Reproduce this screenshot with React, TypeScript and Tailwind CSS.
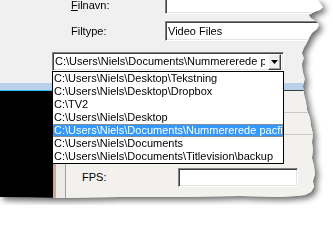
import React from "react";

const items = [
  "C:\\Users\\Niels\\Desktop\\Tekstning",
  "C:\\Users\\Niels\\Desktop\\Dropbox",
  "C:\\TV2",
  "C:\\Users\\Niels\\Desktop",
  "C:\\Users\\Niels\\Documents\\Nummererede pacfiler",
  "C:\\Users\\Niels\\Documents",
  "C:\\Users\\Niels\\Documents\\Titlevision\\backup",
];

const sunken =
  "border border-t-[#828282] border-l-[#828282] border-r-white border-b-white shadow-[inset_1px_1px_0_#404040,inset_-1px_-1px_0_#e3e3e3] bg-white";

export default function App() {
  return (
    <div className="relative w-[333px] h-[205px] overflow-hidden bg-white font-['Liberation_Sans',Arial,sans-serif] text-[11px] leading-[13px] text-black">
      <div className="[filter:drop-shadow(3px_3px_3px_rgba(0,0,0,0.6))]">
        <div className="relative h-[198px] bg-[#f0f0f0] flex flex-col [clip-path:polygon(0_0,318px_0,320px_3px,323px_7px,320px_10px,314px_12px,309px_15px,311px_18px,316px_21px,319px_25px,317px_29px,312px_33px,309px_38px,307px_43px,304px_48px,302px_53px,304px_58px,302px_64px,303px_72px,305px_79px,303px_86px,304px_94px,306px_102px,307px_110px,310px_118px,311px_126px,313px_134px,312px_142px,313px_150px,312px_158px,314px_166px,315px_174px,313px_181px,314px_187px,311px_192px,305px_195px,296px_196px,280px_197px,240px_196px,180px_197px,120px_197px,60px_198px,0_197px)]">
          {/* Filnavn */}
          <div className="flex items-center -mt-[6px] h-[20px] pl-[71px] shrink-0">
            <span className="w-[94px] pt-[2px]">
              <span className="underline">F</span>ilnavn:
            </span>
            <div className={`h-full flex-1 ${sunken}`} />
          </div>
          {/* Filtype */}
          <div className="flex items-center mt-[7px] h-[20px] pl-[71px] shrink-0">
            <span className="w-[94px]">Filtype:</span>
            <div className={`h-full flex-1 flex items-center pl-[2px] ${sunken}`}>
              Video Files
            </div>
          </div>
          {/* Combobox */}
          <div
            className={`ml-[52px] mt-[11px] w-[232px] h-[19px] shrink-0 flex items-center pl-[2px] pr-[2px] py-[1px] ${sunken}`}
          >
            <span className="flex-1 mr-[3px] whitespace-nowrap overflow-hidden">
              C:\Users\Niels\Documents\Nummererede pacfiler
            </span>
            <div className="w-[13px] h-[16px] bg-[#f0f0f0] border border-t-white border-l-white border-r-[#404040] border-b-[#404040] shadow-[inset_-1px_-1px_0_#a0a0a0] flex items-center justify-center">
              <svg width="7" height="4" viewBox="0 0 7 4">
                <polygon points="0,0 7,0 3.5,4" fill="#000" />
              </svg>
            </div>
          </div>
          {/* window behind: blue title strip */}
          <div className="mt-[12px] h-[7px] bg-[#b9d1ea] shrink-0" />
          <div className="h-[1px] flex shrink-0">
            <div className="w-[53px] bg-[#2cc6f5]" />
            <div className="flex-1 bg-[#3c3c3c]" />
          </div>
          {/* lower region */}
          <div className="flex-1 flex">
            <div className="w-[53px] bg-black" />
            <div className="w-[3px] bg-[#c9a99d]" />
            <div className="w-[9px] bg-[#ebeae6]" />
            <div className="w-[1px] bg-[#a0a0a0]" />
            <div className="flex-1 bg-[#f2f1ed] flex flex-col">
              <div className="h-[22px] border-b border-[#c8c8c8]" />
              <div className="h-[22px] border-b border-[#c8c8c8]" />
              <div className="mt-[33px] h-[19px] flex items-center pl-[16px]">
                <span className="w-[96px]">FPS:</span>
                <div className={`w-[120px] h-full ${sunken}`} />
              </div>
            </div>
          </div>

          {/* Dropdown list */}
          <div className="absolute left-[52px] top-[71px] w-[232px] h-[93px] border border-black bg-white flex flex-col">
            {items.map((t, i) =>
              i === 4 ? (
                <div
                  key={t}
                  className="h-[13px] pl-[1px] whitespace-nowrap overflow-hidden bg-[#3399ff] text-white outline-1 outline-dotted outline-[#d08040] -outline-offset-1"
                >
                  {t}
                </div>
              ) : (
                <div key={t} className="h-[13px] pl-[1px] whitespace-nowrap overflow-hidden">
                  {t}
                </div>
              )
            )}
          </div>
        </div>
      </div>
    </div>
  );
}
